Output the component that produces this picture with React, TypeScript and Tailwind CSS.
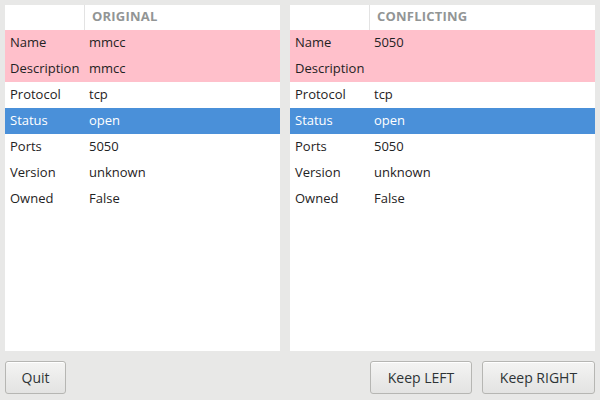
import React from "react";

type Row = { label: string; value: string; kind: "conflict" | "normal" | "selected" };

const left: Row[] = [
  { label: "Name", value: "mmcc", kind: "conflict" },
  { label: "Description", value: "mmcc", kind: "conflict" },
  { label: "Protocol", value: "tcp", kind: "normal" },
  { label: "Status", value: "open", kind: "selected" },
  { label: "Ports", value: "5050", kind: "normal" },
  { label: "Version", value: "unknown", kind: "normal" },
  { label: "Owned", value: "False", kind: "normal" },
];

const right: Row[] = [
  { label: "Name", value: "5050", kind: "conflict" },
  { label: "Description", value: "", kind: "conflict" },
  { label: "Protocol", value: "tcp", kind: "normal" },
  { label: "Status", value: "open", kind: "selected" },
  { label: "Ports", value: "5050", kind: "normal" },
  { label: "Version", value: "unknown", kind: "normal" },
  { label: "Owned", value: "False", kind: "normal" },
];

function Panel({ title, rows, width }: { title: string; rows: Row[]; width: string }) {
  return (
    <div className={`${width} h-full bg-white flex flex-col`}>
      <div className="flex h-[25px] shrink-0">
        <div className="w-[80px] border-r border-[#e3e3e3]" />
        <div className="pl-[7px] pt-[2px] text-[13px] font-bold text-[#929595] tracking-[0.2px]">{title}</div>
      </div>
      {rows.map((r) => (
        <div
          key={r.label}
          className={`flex h-[26px] items-center ${
            r.kind === "conflict"
              ? "bg-[#ffc0cb] text-[#1f2324]"
              : r.kind === "selected"
              ? "bg-[#4a90d9] text-white"
              : "text-[#1f2324]"
          }`}
        >
          <div className="w-[80px] pl-[5px] whitespace-nowrap">{r.label}</div>
          <div className="pl-[4px]">{r.value}</div>
        </div>
      ))}
    </div>
  );
}

function Btn({ children, className = "" }: { children: React.ReactNode; className?: string }) {
  return (
    <button
      className={`h-[33px] rounded-[3px] border border-[#b6b6b3] bg-gradient-to-b from-[#f4f4f3] to-[#e3e3e2] text-[14px] text-[#2e3436] shadow-[inset_0_1px_white] ${className}`}
    >
      {children}
    </button>
  );
}

export default function App() {
  return (
    <div
      className="w-[600px] h-[400px] bg-[#e8e8e7] flex flex-col px-[5px] pt-[5px] pb-[6px] text-[13px]"
      style={{ fontFamily: '"Open Sans", "Noto Sans", sans-serif' }}
    >
      <div className="flex gap-[10px] h-[346px]">
        <Panel title="ORIGINAL" rows={left} width="w-[275px]" />
        <Panel title="CONFLICTING" rows={right} width="w-[305px]" />
      </div>
      <div className="flex mt-[10px] gap-[10px]">
        <Btn className="w-[61px]">Quit</Btn>
        <div className="flex-1" />
        <Btn className="w-[102px]">Keep LEFT</Btn>
        <Btn className="w-[113px]">Keep RIGHT</Btn>
      </div>
    </div>
  );
}
